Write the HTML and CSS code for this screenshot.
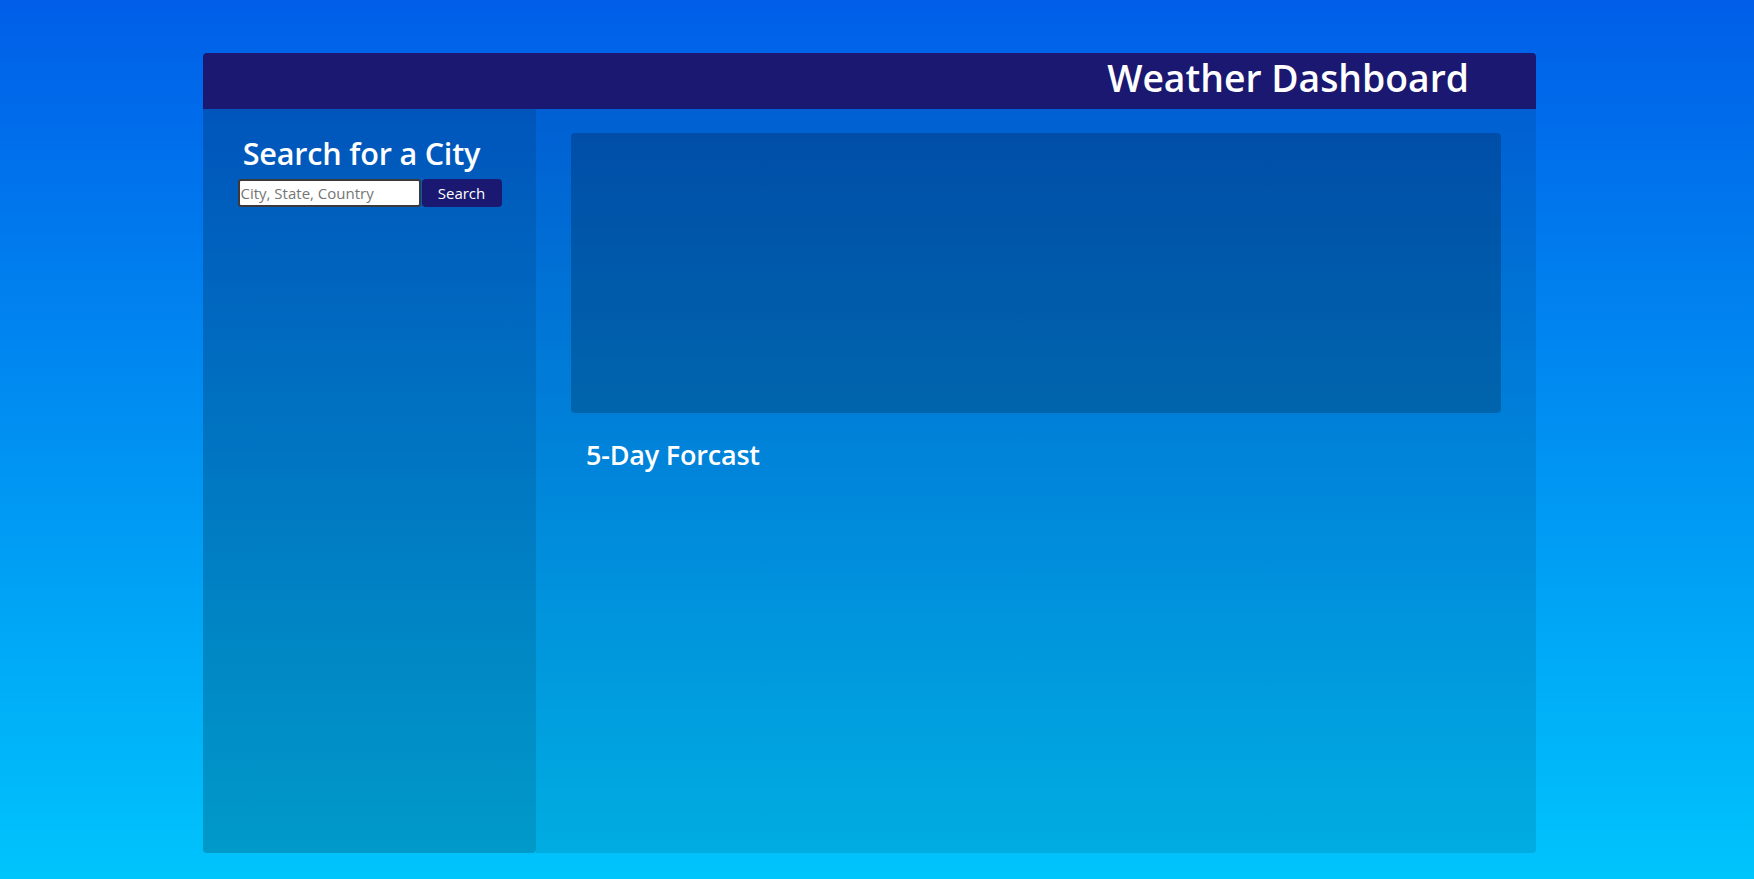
FILE: index.html
```html
<!DOCTYPE html>
<html lang="en">
<head>
<meta charset="utf-8">
<title>Weather Dashboard</title>
<link rel="stylesheet" href="styles.css">
</head>
<body>
<div class="app">
  <header class="topbar">
    <h1 class="title">Weather Dashboard</h1>
  </header>
  <div class="content">
    <aside class="sidebar">
      <h2 class="side-title">Search for a City</h2>
      <form class="search">
        <input class="search-input" type="text" placeholder="City, State, Country">
        <button class="search-btn" type="button">Search</button>
      </form>
    </aside>
    <main class="main">
      <section class="current"></section>
      <h3 class="forecast-title">5-Day Forcast</h3>
    </main>
  </div>
</div>
</body>
</html>
```

FILE: styles.css
```css
html, body {
  margin: 0;
  padding: 0;
}
body {
  min-height: 879px;
  background: linear-gradient(to bottom, #005ee8 0%, #00c4fc 100%);
  font-family: "Open Sans", "Noto Sans", sans-serif;
  color: #ffffff;
}
.app {
  margin: 0 218px 0 203px;
  padding-top: 53px;
  display: flex;
  flex-direction: column;
}
.topbar {
  height: 56px;
  background: #1a1870;
  border-radius: 4px 4px 0 0;
  display: flex;
  align-items: center;
  justify-content: flex-end;
  padding-right: 67px;
}
.title {
  margin: 0 0 6px 0;
  font-size: 37.3px;
  font-weight: 600;
  line-height: 1;
  letter-spacing: 0;
}
.content {
  display: grid;
  grid-template-columns: 333px 1fr;
  height: 744px;
}
.sidebar {
  background: rgba(0, 0, 0, 0.2);
  border-radius: 0 0 4px 4px;
  display: flex;
  flex-direction: column;
  align-items: center;
}
.side-title {
  margin: 26px 16px 0 0;
  font-size: 30.6px;
  font-weight: 600;
  line-height: 1.2;
  letter-spacing: -0.2px;
}
.search {
  display: flex;
  gap: 1px;
  margin-top: 7px;
}
.search-input {
  box-sizing: border-box;
  width: 183px;
  height: 28px;
  border: 2px solid #3a3a3a;
  border-radius: 3px;
  padding: 0 1px;
  font-family: inherit;
  font-size: 15px;
  color: #222;
  background: #fff;
}
.search-input::placeholder {
  color: #757575;
}
.search-btn {
  box-sizing: border-box;
  width: 80px;
  height: 28px;
  border: none;
  border-radius: 4px;
  background: #1a1870;
  color: #fff;
  font-family: inherit;
  font-size: 15px;
}
.main {
  background: rgba(0, 0, 0, 0.1);
  border-radius: 0 0 4px 0;
  padding: 24px 35px;
}
.current {
  height: 280px;
  border-radius: 4px;
  background: rgba(0, 0, 0, 0.2);
}
.forecast-title {
  margin: 26px 0 0 15px;
  font-size: 27px;
  font-weight: 600;
  line-height: 1.2;
  letter-spacing: -0.2px;
}
```
